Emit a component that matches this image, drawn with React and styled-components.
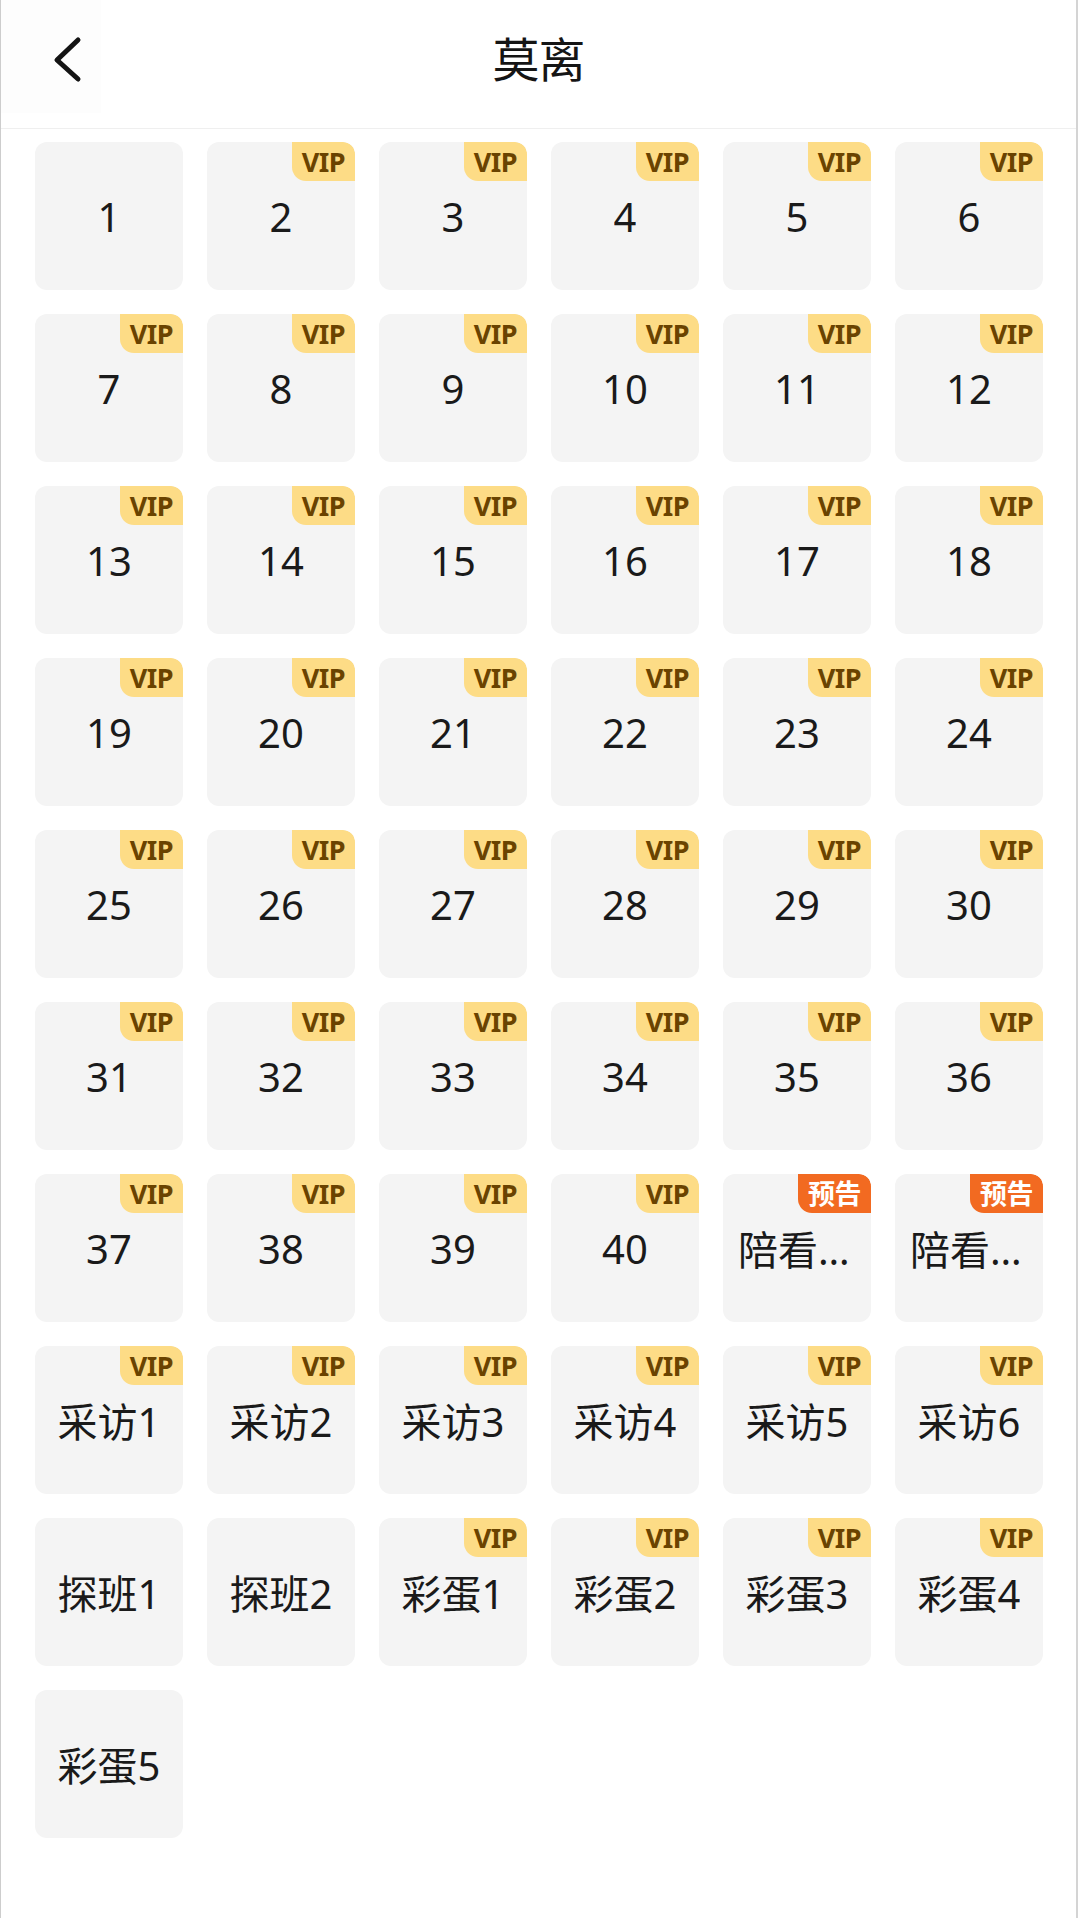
import styled, { createGlobalStyle } from 'styled-components';

const GlobalStyle = createGlobalStyle`
    body {
        margin: 0;
        background: #ffffff;
        font-family: 'Noto Sans', 'Noto Sans CJK SC', sans-serif;
    }
`;

const episodes = [
    ...Array.from({ length: 40 }, (_, i) => ({
        title: String(i + 1),
        tag: i === 0 ? null : 'vip',
    })),
    { title: '陪看第一期', tag: 'preview' },
    { title: '陪看第二期', tag: 'preview' },
    ...[1, 2, 3, 4, 5, 6].map((n) => ({ title: `采访${n}`, tag: 'vip' })),
    { title: '探班1', tag: null },
    { title: '探班2', tag: null },
    ...[1, 2, 3, 4].map((n) => ({ title: `彩蛋${n}`, tag: 'vip' })),
    { title: '彩蛋5', tag: null },
];

const tags = {
    vip: { text: 'VIP', bg: '#fddc86', color: '#6a4300' },
    preview: { text: '预告', bg: '#f26a21', color: '#ffffff' },
};

export default function App() {
    return (
        <>
            <GlobalStyle />
            <Page>
                <Header>
                    <BackButton aria-label="返回">
                        <svg width="44" height="60" viewBox="0 0 44 60">
                            <polyline
                                points="31,10 10,30 31,49"
                                fill="none"
                                stroke="#141414"
                                strokeWidth="5"
                                strokeLinecap="round"
                                strokeLinejoin="round"
                            />
                        </svg>
                    </BackButton>
                    <Title>莫离</Title>
                    <span />
                </Header>
                <Grid>
                    {episodes.map((ep) => (
                        <Cell key={ep.title}>
                            <Label>{ep.title}</Label>
                            {ep.tag && (
                                <Badge $bg={tags[ep.tag].bg} $color={tags[ep.tag].color}>
                                    {tags[ep.tag].text}
                                </Badge>
                            )}
                        </Cell>
                    ))}
                </Grid>
            </Page>
        </>
    );
}

const Page = styled.div`
    box-sizing: border-box;
    width: 1078px;
    min-height: 1918px;
    border-left: 1px solid #cdcdcd;
    border-right: 2px solid #d4d4d4;
    background: #ffffff;
`;

const Header = styled.header`
    box-sizing: border-box;
    height: 129px;
    display: grid;
    grid-template-columns: 1fr auto 1fr;
    align-items: start;
    border-bottom: 1px solid #efefef;
`;

const BackButton = styled.button`
    justify-self: start;
    box-sizing: border-box;
    width: 100px;
    height: 113px;
    padding: 7px 0 0 46px;
    border: none;
    background: #fdfdfd;
    display: flex;
    align-items: center;
    cursor: pointer;
`;

const Title = styled.h1`
    margin: 0;
    height: 118px;
    line-height: 118px;
    font-size: 47px;
    font-weight: 400;
    color: #151515;
    letter-spacing: -1px;
`;

const Grid = styled.main`
    display: grid;
    grid-template-columns: repeat(6, 148px);
    grid-auto-rows: 148px;
    gap: 24px;
    padding: 13px 37px 0 34px;
`;

const Cell = styled.div`
    position: relative;
    box-sizing: border-box;
    padding: 0 15px;
    border-radius: 12px;
    background: #f4f4f4;
    display: flex;
    align-items: center;
    justify-content: center;
    overflow: hidden;
`;

const Label = styled.span`
    max-width: 100%;
    overflow: hidden;
    white-space: nowrap;
    text-overflow: ellipsis;
    font-size: 40px;
    color: #1a1a1a;
`;

const Badge = styled.span`
    position: absolute;
    top: 0;
    right: 0;
    height: 39px;
    padding: 0 10px;
    border-radius: 0 12px 0 14px;
    background: ${(p) => p.$bg};
    color: ${(p) => p.$color};
    font-size: 27px;
    font-weight: 700;
    letter-spacing: -0.5px;
    line-height: 39px;
`;
